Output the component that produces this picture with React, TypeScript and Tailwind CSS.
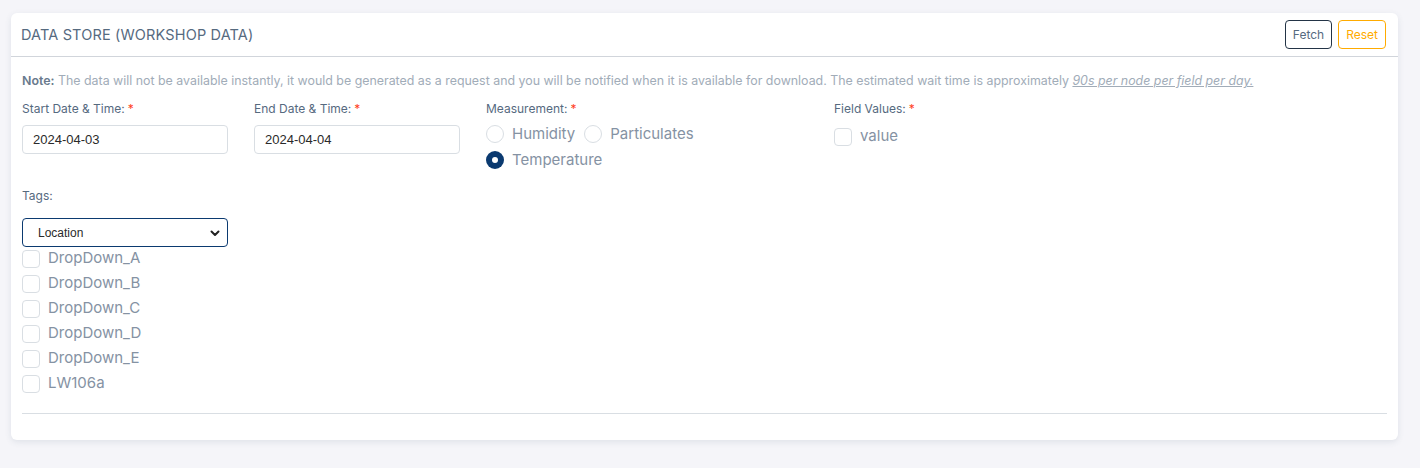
import { useState } from 'react';

const tags = ['DropDown_A', 'DropDown_B', 'DropDown_C', 'DropDown_D', 'DropDown_E', 'LW106a'];

const Req = () => <span className="text-[#ff3e1d] ml-[3px]">*</span>;

const Box = ({ label }: { label: string }) => (
  <label className="flex items-center h-[25px] gap-[8px] text-[15px] text-[#8592a3] cursor-pointer">
    <span className="w-[18px] h-[18px] rounded-[4px] border border-[#d9dee3] bg-white shrink-0" />
    {label}
  </label>
);

const Radio = ({ label, checked, onClick }: { label: string; checked: boolean; onClick: () => void }) => (
  <label onClick={onClick} className="flex items-center gap-[8px] text-[15px] text-[#8592a3] cursor-pointer">
    {checked ? (
      <span className="w-[18px] h-[18px] rounded-full bg-[#0b3a70] flex items-center justify-center shrink-0">
        <span className="w-[6px] h-[6px] rounded-full bg-white" />
      </span>
    ) : (
      <span className="w-[18px] h-[18px] rounded-full border border-[#d9dee3] bg-white shrink-0" />
    )}
    {label}
  </label>
);

const App = () => {
  const [measure, setMeasure] = useState('Temperature');

  return (
    <div className="min-h-[468px] w-full bg-[#f5f5f9] pt-[13px] pl-[11px] pr-[22px] font-['Inter',sans-serif]">
      <div className="w-[1387px] h-[427px] bg-white rounded-[6px] shadow-[0_2px_6px_rgba(67,89,113,0.12)]">
        <div className="h-[44px] flex items-center justify-between pl-[10px] pr-[12px] border-b border-[#d1d5db]">
          <h5 className="text-[14.5px] uppercase text-[#566a7f] tracking-[0.01em]">Data Store (Workshop Data)</h5>
          <div className="flex gap-[6px]">
            <button className="h-[29px] px-[7px] rounded-[4px] border border-[#233446] text-[12px] text-[#566a7f]">Fetch</button>
            <button className="h-[29px] px-[7px] rounded-[4px] border border-[#ffab00] text-[12px] text-[#ffab00]">Reset</button>
          </div>
        </div>

        <div className="px-[11px]">
          <p className="pt-[16px] text-[12.4px] leading-[16px] text-[#a1acb8]">
            <b className="text-[#697a8d] font-semibold">Note:</b> The data will not be available instantly, it would be generated as a request and you will be notified when it is available for download. The estimated wait time is approximately{' '}
            <i className="underline">90s per node per field per day.</i>
          </p>

          <div className="flex mt-[12px]">
            <div className="w-[232px]">
              <div className="text-[12px] leading-[16px] text-[#566a7f]">Start Date &amp; Time:<Req /></div>
              <input readOnly value="2024-04-03" className="mt-[8px] w-[206px] h-[29px] rounded-[4px] border border-[#d9dee3] px-[10px] text-[13px] text-[#2a2a2a] font-['Liberation_Sans',sans-serif] outline-none" />
            </div>
            <div className="w-[232px]">
              <div className="text-[12px] leading-[16px] text-[#566a7f]">End Date &amp; Time:<Req /></div>
              <input readOnly value="2024-04-04" className="mt-[8px] w-[206px] h-[29px] rounded-[4px] border border-[#d9dee3] px-[10px] text-[13px] text-[#2a2a2a] font-['Liberation_Sans',sans-serif] outline-none" />
            </div>
            <div className="w-[348px]">
              <div className="text-[12px] leading-[16px] text-[#566a7f]">Measurement:<Req /></div>
              <div className="mt-[6px] flex flex-wrap w-[240px] gap-y-[3px] gap-x-[9px]">
                {['Humidity', 'Particulates', 'Temperature'].map(m => (
                  <Radio key={m} label={m} checked={measure === m} onClick={() => setMeasure(m)} />
                ))}
              </div>
            </div>
            <div>
              <div className="text-[12px] leading-[16px] text-[#566a7f]">Field Values:<Req /></div>
              <div className="mt-[7px]">
                <Box label="value" />
              </div>
            </div>
          </div>

          <div className="mt-[17px] text-[12px] leading-[16px] text-[#566a7f]">Tags:</div>
          <div className="mt-[14px] w-[206px] h-[29px] rounded-[4px] border border-[#0b3a70] flex items-center justify-between pl-[15px] pr-[6px] font-['Liberation_Sans',sans-serif] text-[12px] text-[#2a2a2a]">
            Location
            <svg width="12" height="12" viewBox="0 0 12 12" fill="none" stroke="#222" strokeWidth="2" strokeLinecap="round" strokeLinejoin="round">
              <path d="M2.5 4.5 6 8l3.5-3.5" />
            </svg>
          </div>
          <div className="flex flex-col -mt-[1px]">
            {tags.map(t => (
              <Box key={t} label={t} />
            ))}
          </div>
          <div className="mt-[17px] border-t border-[#d9dee3]" />
        </div>
      </div>
    </div>
  );
};

export default App;
